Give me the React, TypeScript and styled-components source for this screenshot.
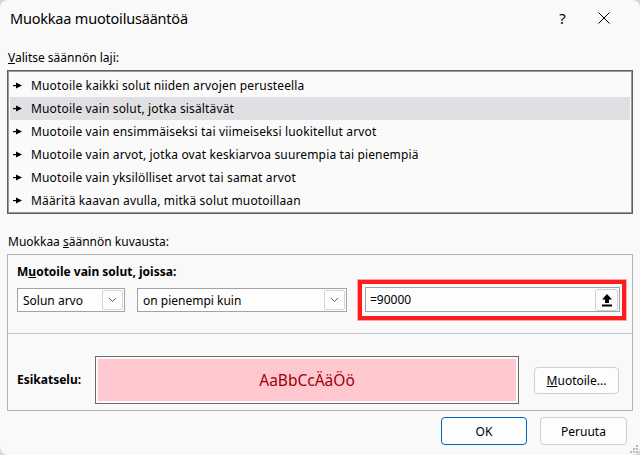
import styled, { createGlobalStyle } from 'styled-components'

const GlobalStyle = createGlobalStyle`
  html, body {
    margin: 0;
    padding: 0;
    background: #d6d6d6;
  }
  body {
    font-family: "Noto Sans", "Liberation Sans", sans-serif;
    font-size: 12px;
    color: #000;
  }
`

const Dialog = styled.div`
  position: relative;
  width: 640px;
  height: 455px;
  background: #f9f9f9;
  border-radius: 8px;
  display: flex;
  flex-direction: column;
  overflow: hidden;
`

const TitleBar = styled.div`
  height: 36px;
  display: flex;
  align-items: center;
  padding: 0 16px 0 10px;
`

const Title = styled.div`
  flex: 1;
  font-size: 14.5px;
  letter-spacing: -0.2px;
`

const CaptionButton = styled.div`
  width: 41px;
  height: 36px;
  display: flex;
  align-items: center;
  justify-content: center;
  font-size: 15px;
`

const Body = styled.div`
  padding: 0 7px;
  display: flex;
  flex-direction: column;
`

const SectionLabel = styled.div<{ $top: number }>`
  margin-top: ${(p) => p.$top}px;
  padding-left: 1px;
  line-height: 16px;
`

const ListBox = styled.div`
  margin-top: 4px;
  height: 144px;
  box-sizing: border-box;
  border: 1px solid #5e5e5e;
  box-shadow: inset 0 0 0 1px #9a9a9a;
  background: #fafafa;
  padding: 3px 2px;
`

const ListItem = styled.div<{ $selected?: boolean }>`
  height: 23px;
  display: flex;
  align-items: center;
  gap: 9px;
  padding-left: 3px;
  letter-spacing: 0.15px;
  background: ${(p) => (p.$selected ? '#e0e0e4' : 'transparent')};
`

const GroupBox = styled.div`
  margin-top: 4px;
  border: 1px solid #b4b4b4;
  display: flex;
  flex-direction: column;
`

const ConditionPane = styled.div`
  padding: 9px 5px 13px 9px;
  border-bottom: 1px solid #c8c8c8;
`

const BoldLabel = styled.div`
  font-weight: 700;
  line-height: 16px;
`

const ControlRow = styled.div`
  height: 40px;
  display: flex;
  align-items: center;
`

const Combo = styled.div<{ $width: number; $gap: number }>`
  width: ${(p) => p.$width}px;
  margin-right: ${(p) => p.$gap}px;
  height: 24px;
  box-sizing: border-box;
  border: 1px solid #a3a3a3;
  background: #fdfdfd;
  display: flex;
  align-items: center;
  padding: 0 1px 0 5px;
`

const ComboText = styled.span`
  flex: 1;
`

const ChevronButton = styled.div`
  width: 21px;
  height: 20px;
  box-sizing: border-box;
  border: 1px solid #d4d4d4;
  border-radius: 2px;
  display: flex;
  align-items: center;
  justify-content: center;
`

const Highlight = styled.div`
  width: 268px;
  box-sizing: border-box;
  border: 4px solid #ff1c1c;
  box-shadow: 0 0 0 1px rgba(255, 60, 60, 0.45);
  padding: 3px 2px 4px 3px;
`

const ValueInput = styled.div`
  height: 25px;
  box-sizing: border-box;
  border: 1px solid #a3a3a3;
  background: #fdfdfd;
  display: flex;
  align-items: center;
  padding: 0 1px 0 4px;
`

const ValueText = styled.span`
  flex: 1;
`

const CollapseButton = styled.div`
  width: 23px;
  height: 22px;
  box-sizing: border-box;
  border: 1px solid #cfcfcf;
  border-radius: 3px;
  background: #fdfdfd;
  display: flex;
  align-items: center;
  justify-content: center;
`

const PreviewPane = styled.div`
  padding: 22px 12px 6px 9px;
  display: flex;
  align-items: center;
`

const PreviewLabel = styled(BoldLabel)`
  width: 78px;
`

const PreviewFrame = styled.div`
  width: 424px;
  height: 48px;
  box-sizing: border-box;
  border: 1px solid #6a6a6a;
  padding: 2px;
  margin-right: 15px;
`

const PreviewSwatch = styled.div`
  height: 100%;
  background: #ffc7ce;
  color: #9c0006;
  font-size: 15.5px;
  display: flex;
  align-items: center;
  justify-content: center;
`

const Button = styled.div<{ $default?: boolean; $width: number; $height: number }>`
  width: ${(p) => p.$width}px;
  height: ${(p) => p.$height}px;
  box-sizing: border-box;
  border: 1px solid ${(p) => (p.$default ? '#0067c0' : '#d0d0d0')};
  border-radius: 4px;
  background: #fdfdfd;
  display: flex;
  align-items: center;
  justify-content: center;
`

const Footer = styled.div`
  margin-top: 6px;
  padding-right: 6px;
  display: flex;
  justify-content: flex-end;
  gap: 13px;
`

const Grip = styled.svg`
  position: absolute;
  right: 2px;
  bottom: 2px;
`

const rules = [
  'Muotoile kaikki solut niiden arvojen perusteella',
  'Muotoile vain solut, jotka sisältävät',
  'Muotoile vain ensimmäiseksi tai viimeiseksi luokitellut arvot',
  'Muotoile vain arvot, jotka ovat keskiarvoa suurempia tai pienempiä',
  'Muotoile vain yksilölliset arvot tai samat arvot',
  'Määritä kaavan avulla, mitkä solut muotoillaan',
]

function Pointer() {
  return (
    <svg width="9" height="7" viewBox="0 0 9 7">
      <rect x="0" y="3" width="4" height="1.2" fill="#000" />
      <path d="M3 0.5 L9 3.5 L3 6.5 Z" fill="#000" />
    </svg>
  )
}

function Chevron() {
  return (
    <svg width="9" height="6" viewBox="0 0 9 6">
      <path d="M1 1 L4.5 4.5 L8 1" fill="none" stroke="#606060" strokeWidth="1" />
    </svg>
  )
}

function CollapseIcon() {
  return (
    <svg width="12" height="14" viewBox="0 0 12 14">
      <path d="M6 1 L11 6.5 H8 V10 H4 V6.5 H1 Z" fill="#000" />
      <rect x="1" y="11.5" width="10" height="2" fill="#000" />
    </svg>
  )
}

export default function App() {
  return (
    <>
      <GlobalStyle />
      <Dialog>
        <TitleBar>
          <Title>Muokkaa muotoilusääntöä</Title>
          <CaptionButton>?</CaptionButton>
          <CaptionButton>
            <svg width="12" height="12" viewBox="0 0 12 12">
              <path d="M0.5 0.5 L11.5 11.5 M11.5 0.5 L0.5 11.5" stroke="#000" strokeWidth="1" />
            </svg>
          </CaptionButton>
        </TitleBar>

        <Body>
          <SectionLabel $top={14}>
            <u>V</u>alitse säännön laji:
          </SectionLabel>
          <ListBox>
            {rules.map((rule, i) => (
              <ListItem key={rule} $selected={i === 1}>
                <Pointer />
                <span>{rule}</span>
              </ListItem>
            ))}
          </ListBox>

          <SectionLabel $top={20}>
            Muokkaa <u>s</u>äännön kuvausta:
          </SectionLabel>
          <GroupBox>
            <ConditionPane>
              <BoldLabel>
                M<u>u</u>otoile vain solut, joissa:
              </BoldLabel>
              <ControlRow>
                <Combo $width={108} $gap={12}>
                  <ComboText>Solun arvo</ComboText>
                  <ChevronButton>
                    <Chevron />
                  </ChevronButton>
                </Combo>
                <Combo $width={210} $gap={11}>
                  <ComboText>on pienempi kuin</ComboText>
                  <ChevronButton>
                    <Chevron />
                  </ChevronButton>
                </Combo>
                <Highlight>
                  <ValueInput>
                    <ValueText>=90000</ValueText>
                    <CollapseButton>
                      <CollapseIcon />
                    </CollapseButton>
                  </ValueInput>
                </Highlight>
              </ControlRow>
            </ConditionPane>

            <PreviewPane>
              <PreviewLabel>Esikatselu:</PreviewLabel>
              <PreviewFrame>
                <PreviewSwatch>AaBbCcÄäÖö</PreviewSwatch>
              </PreviewFrame>
              <Button $width={85} $height={27}>
                <u>M</u>uotoile...
              </Button>
            </PreviewPane>
          </GroupBox>

          <Footer>
            <Button $default $width={86} $height={28}>
              OK
            </Button>
            <Button $width={87} $height={28}>
              Peruuta
            </Button>
          </Footer>
        </Body>

        <Grip width="9" height="9" viewBox="0 0 9 9">
          <rect x="7" y="1" width="2" height="2" fill="#b8b8b8" />
          <rect x="4" y="4" width="2" height="2" fill="#b8b8b8" />
          <rect x="7" y="4" width="2" height="2" fill="#b8b8b8" />
          <rect x="1" y="7" width="2" height="2" fill="#b8b8b8" />
          <rect x="4" y="7" width="2" height="2" fill="#b8b8b8" />
          <rect x="7" y="7" width="2" height="2" fill="#b8b8b8" />
        </Grip>
      </Dialog>
    </>
  )
}
